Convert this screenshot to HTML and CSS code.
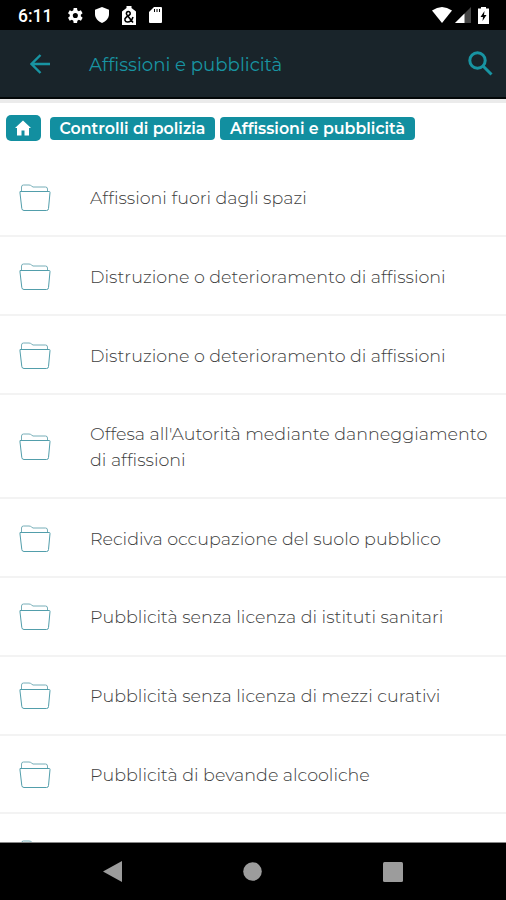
FILE: index.html
```html
<!DOCTYPE html>
<html lang="it">
<head>
<meta charset="utf-8">
<title>Affissioni e pubblicità</title>
<link rel="stylesheet" href="styles.css">
</head>
<body>
<svg class="defs" width="0" height="0" aria-hidden="true">
  <symbol id="folder" viewBox="0 0 32 28">
    <path class="tab" d="M2.500 7V3Q2.500 1 4.500 1H10Q11.500 1 12.500 2L14 3H26.500Q28.500 3 28.500 5V7"/>
    <path d="M1 7.500H30.500Q31 7.500 31 8.500L29.500 24.500Q29.500 26.500 27.500 26.500H5Q3 26.500 2.800 24.500L1 9Z"/>
  </symbol>
</svg>
<div class="screen">
  <div class="status">
    <span class="clock">6:11</span>
    <svg class="gear" width="18" height="18" viewBox="2 2 20 20"><path fill-rule="evenodd" d="M19.400 13c.1-.7.1-1.300 0-2l2.100-1.600-2-3.500-2.500 1a7 7 0 0 0-1.700-1L15 3.300h-4l-.4 2.600a7 7 0 0 0-1.700 1l-2.500-1-2 3.500L6.500 11c-.1.700-.1 1.300 0 2l-2.100 1.600 2 3.500 2.500-1a7 7 0 0 0 1.700 1l.4 2.600h4l.4-2.600a7 7 0 0 0 1.700-1l2.500 1 2-3.500zM13 15a3 3 0 1 1 0-6 3 3 0 0 1 0 6z"/></svg>
    <svg class="shield" width="14" height="16" viewBox="0 0 14 16"><path d="M7 0l7 2.700V7c0 4-3 7.500-7 9-4-1.500-7-5-7-9V2.700z"/></svg>
    <svg class="debug" width="14" height="19" viewBox="0 0 14 19"><path d="M4.500 2V0h5v2L14 5.500V19H0V5.500z"/><path class="ink" d="M11 16.500L5 9C3.500 7 5 5.500 6.500 5.500S9 7.500 7.500 9L4.500 11C1.500 13 3 16 5.500 16S10 14 11 11"/></svg>
    <svg class="sd" width="13" height="16" viewBox="0 0 13 16"><path d="M5 0h7q1 0 1 1v14q0 1-1 1H1q-1 0-1-1V5z"/><path class="ink thin" d="M5.500 2v3M8 2v3M10.500 2v3"/></svg>
    <svg class="wifi" width="20" height="16" viewBox="0 0 20 16"><path d="M0 3.500Q10-3.500 20 3.500L10 16z"/></svg>
    <svg class="cell" width="16" height="16" viewBox="0 0 16 16"><path class="dim" d="M0 16L16 0v16z"/><path d="M0 16L9.500 6.500V16z"/></svg>
    <svg class="battery" width="11" height="17" viewBox="0 0 11 17"><path d="M3 1.500V0h5v1.500h3V17H0V1.500z"/><path class="bolt" d="M6.500 4L2.500 10H5L4.500 14 8.500 8H6z"/></svg>
  </div>
  <header class="appbar">
    <svg class="back" width="20" height="20" viewBox="0 0 20 20"><path d="M20 10H2M10.500 1L1.500 10l9 9"/></svg>
    <h1 class="title">Affissioni e pubblicità</h1>
    <svg class="search" width="25" height="25" viewBox="0 0 25 25"><circle cx="9.500" cy="9.500" r="7.700"/><path d="M15 15l8.500 8.500"/></svg>
  </header>
  <main class="content">
    <nav class="crumbs">
      <a class="crumb home"><svg width="16" height="16" viewBox="0 0 16 16"><path d="M8 .5L16 8h-2v7.500H9.500v-5h-3v5H2V8H0z"/></svg></a>
      <a class="crumb police">Controlli di polizia</a>
      <a class="crumb posters">Affissioni e pubblicità</a>
    </nav>
    <ul class="list">
      <li class="row"><svg class="folder"><use href="#folder"/></svg><span>Affissioni fuori dagli spazi</span></li>
      <li class="row"><svg class="folder"><use href="#folder"/></svg><span>Distruzione o deterioramento di affissioni</span></li>
      <li class="row"><svg class="folder"><use href="#folder"/></svg><span>Distruzione o deterioramento di affissioni</span></li>
      <li class="row double"><svg class="folder"><use href="#folder"/></svg><span>Offesa all'Autorità mediante danneggiamento<br>di affissioni</span></li>
      <li class="row"><svg class="folder"><use href="#folder"/></svg><span>Recidiva occupazione del suolo pubblico</span></li>
      <li class="row"><svg class="folder"><use href="#folder"/></svg><span>Pubblicità senza licenza di istituti sanitari</span></li>
      <li class="row"><svg class="folder"><use href="#folder"/></svg><span>Pubblicità senza licenza di mezzi curativi</span></li>
      <li class="row"><svg class="folder"><use href="#folder"/></svg><span>Pubblicità di bevande alcooliche</span></li>
      <li class="row last"><svg class="folder"><use href="#folder"/></svg></li>
    </ul>
  </main>
  <footer class="navbar">
    <svg width="19" height="21" viewBox="0 0 19 21"><path d="M0 10.500L19 0v21z"/></svg>
    <svg width="19" height="19" viewBox="0 0 19 19"><circle cx="9.500" cy="9.500" r="9.300"/></svg>
    <svg width="20" height="20" viewBox="0 0 20 20"><rect width="20" height="20" rx="1.500"/></svg>
  </footer>
</div>
</body>
</html>
```
FILE: styles.css
```css
* { box-sizing: border-box; }
body { margin: 0; background: #000; font-family: Montserrat, Inter, sans-serif; font-variant-ligatures: none; }
svg { display: block; flex: none; }
.defs { position: absolute; }
.screen { width: 506px; height: 900px; display: flex; flex-direction: column; overflow: hidden; }

.status { flex: none; height: 30px; display: flex; align-items: center; background: #000; fill: #fff; }
.clock { width: 48px; margin-left: 18px; color: #fff; font: 500 17.500px/30px Roboto, sans-serif; padding-top: 2px; }
.gear { width: 17px; height: 17px; }
.shield { margin-left: 12px; }
.debug { margin-left: 13px; }
.sd { margin-left: 13px; }
.wifi { margin-left: auto; }
.cell { margin-left: 3px; }
.battery { margin: 0 17px 0 7px; }
.ink { fill: none; stroke: #000; stroke-width: 1.600; }
.thin { stroke-width: 1; }
.dim { fill: #444; }
.bolt { fill: #000; }

.appbar { flex: none; height: 69px; display: flex; align-items: center; padding: 0 13px 0 30px; background: #19242a; border-bottom: 2px solid #030708; }
.back, .search { fill: none; stroke: #1894a2; stroke-width: 2.400; }
.search { stroke-width: 3; }
.title { flex: 1; margin: 2px 0 0 39px; color: #1894a2; font-size: 18.150px; font-weight: 400; white-space: nowrap; }

.content { flex: 1; min-height: 0; overflow: hidden; background: #fff; border-top: 4px solid #ebebeb; border-bottom: 1px solid #888; }
.crumbs { height: 55.700px; display: flex; align-items: flex-start; padding: 14px 6px 0; }
.crumb { height: 23px; border-radius: 4px; background: #128fa0; color: #fff; font-size: 15.800px; font-weight: 600; line-height: 24px; text-align: center; white-space: nowrap; }
.home { width: 35px; height: 26px; margin: -2px 9px 0 0; padding: 5px 0 0 9px; border-radius: 5px; fill: #fff; }
.police { width: 165px; margin-right: 5px; }
.posters { width: 195px; }

.list { margin: 0; padding: 0; list-style: none; }
.row { display: flex; align-items: center; padding: 26.400px 0 24.400px 19px; border-bottom: 2px solid #f3f3f3; color: #404040; font-size: 17.500px; font-weight: 300; line-height: 26px; white-space: nowrap; }
.row.double { padding: 26px 0 25px 19px; line-height: 25.600px; }
.row.last { padding-top: 27px; }
.folder { width: 32px; height: 28px; margin: -1px 39px -1px 0; fill: none; stroke: #529eab; stroke-width: 1; }
.tab { stroke: #76aeb8; }

.navbar { flex: none; height: 57px; display: flex; justify-content: space-between; align-items: center; padding: 0 103px; background: #000; fill: #9c9c9c; }
```
